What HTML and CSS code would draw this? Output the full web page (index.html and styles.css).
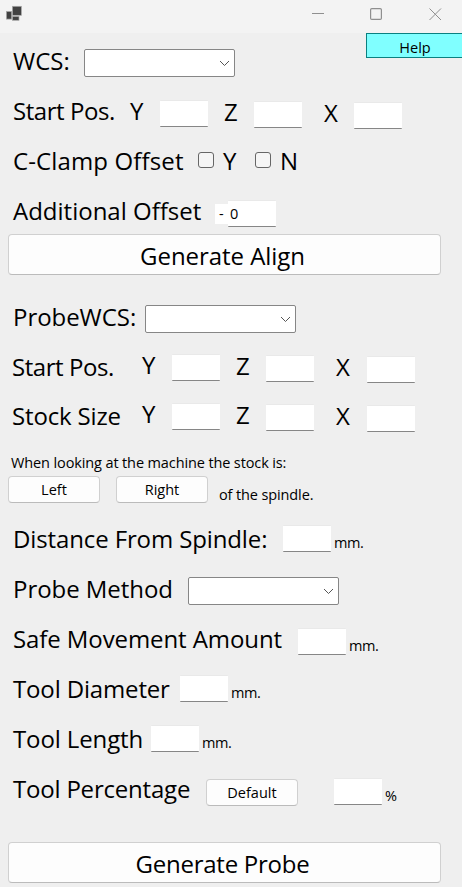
FILE: index.html
```html
<!DOCTYPE html>
<html lang="en">
<head>
<meta charset="utf-8">
<title>Probe Setup</title>
<link rel="stylesheet" href="styles.css">
</head>
<body>
<header class="titlebar">
  <svg class="app-icon" width="18" height="18" viewBox="0 0 18 18"><g fill="#414141" stroke="#a9a9a9" stroke-width=".7"><rect x="7.4" y="1.3" width="9" height="9"/><rect x="1.4" y="6.5" width="5.3" height="7.6"/><rect x="7.4" y="11.4" width="6.6" height="3.9"/></g></svg>
  <svg class="controls" width="150" height="33" viewBox="0 0 150 33" fill="none" stroke="#8f8f8f"><path d="M0 13.5h12"/><rect x="58.6" y="8.6" width="10.8" height="10.8" rx="1.2" stroke-width="1.2"/><path d="M117.5 8.5l11.5 11.5M129 8.5L117.5 20"/></svg>
</header>
<main class="form">
  <button class="help"><span>Help</span></button>

  <div class="row row-wcs">
    <span class="label t-wcs">WCS:</span>
    <div class="select"><svg width="11" height="7" viewBox="0 0 11 7"><path d="M1 1l4.5 4.5L10 1"/></svg></div>
  </div>
  <div class="row row-start">
    <span class="label t-start">Start Pos.</span>
    <span class="label">Y</span><input class="box">
    <span class="label z">Z</span><input class="box z">
    <span class="label x">X</span><input class="box x">
  </div>
  <div class="row row-clamp">
    <span class="label t-clamp">C-Clamp Offset</span>
    <i class="check"></i><span class="label">Y</span>
    <i class="check"></i><span class="label">N</span>
  </div>
  <div class="row row-additional">
    <span class="label">Additional Offset</span>
    <span class="minus">-</span><input class="box" value="0">
  </div>
  <button class="btn btn-large btn-align">Generate Align</button>

  <div class="row row-probe-wcs">
    <span class="label t-probe-wcs">ProbeWCS:</span>
    <div class="select"><svg width="11" height="7" viewBox="0 0 11 7"><path d="M1 1l4.5 4.5L10 1"/></svg></div>
  </div>
  <div class="row row-axes">
    <span class="label t-start">Start Pos.</span>
    <span class="label y">Y</span><input class="box y">
    <span class="label z">Z</span><input class="box z">
    <span class="label">X</span><input class="box">
  </div>
  <div class="row row-axes row-stock">
    <span class="label t-stock">Stock Size</span>
    <span class="label y">Y</span><input class="box y">
    <span class="label z">Z</span><input class="box z">
    <span class="label">X</span><input class="box">
  </div>

  <p class="small question">When looking at the machine the stock is:</p>
  <div class="sides">
    <button class="btn">Left</button>
    <button class="btn">Right</button>
    <span class="small">of the spindle.</span>
  </div>

  <div class="row row-distance">
    <span class="label t-distance">Distance From Spindle:</span><input class="box"><span class="small unit">mm.</span>
  </div>
  <div class="row row-method">
    <span class="label t-method">Probe Method</span>
    <div class="select"><svg width="11" height="7" viewBox="0 0 11 7"><path d="M1 1l4.5 4.5L10 1"/></svg></div>
  </div>
  <div class="row row-safe">
    <span class="label t-safe">Safe Movement Amount</span><input class="box"><span class="small unit">mm.</span>
  </div>
  <div class="row row-diameter">
    <span class="label t-diameter">Tool Diameter</span><input class="box"><span class="small unit">mm.</span>
  </div>
  <div class="row row-length">
    <span class="label t-length">Tool Length</span><input class="box"><span class="small unit">mm.</span>
  </div>
  <div class="row row-percent">
    <span class="label t-percent">Tool Percentage</span>
    <button class="btn">Default</button>
    <input class="box"><span class="small unit">%</span>
  </div>
  <button class="btn btn-large btn-probe">Generate Probe</button>
</main>
</body>
</html>
```
FILE: styles.css
```css
* { box-sizing: border-box; }

body {
  margin: 0;
  width: 462px;
  height: 887px;
  overflow: hidden;
  background: #efefef;
  color: #000;
  font: 14.5px/20px "Open Sans", "Noto Sans", sans-serif;
}

button, input { font: inherit; color: inherit; margin: 0; padding: 0; border-radius: 0; }

.titlebar {
  display: flex;
  justify-content: space-between;
  height: 33px;
  background: #f3f3f3;
}
.app-icon { margin: 5px 0 0 5px; }

.form { position: relative; padding-top: 11px; }

.help {
  position: absolute;
  top: 0;
  left: 366px;
  width: 98px;
  height: 25px;
  background: #80ffff;
  border: 1px solid #0a8080;
}
.help span {
  display: block;
  height: 18px;
  margin-top: 2px;
  overflow: hidden;
  line-height: 20px;
}

.row {
  display: grid;
  align-items: start;
  height: 40px;
  margin-bottom: 10px;
  padding-left: 12px;
}
.row-wcs { grid-template-columns: 72px 151px; }
.row-start { grid-template-columns: 118px 30px 64px 30px 70px 30px 48px; }
.row-clamp { grid-template-columns: 186px 25px 32px 25px 40px; }
.row-additional { grid-template-columns: 203px 13px 48px; margin-bottom: 0; }
.row-probe-wcs { grid-template-columns: 133px 151px; margin-top: 25px; }
.row-axes { grid-template-columns: 130px 30px 64px 30px 70px 31px 48px; }
.row-stock { margin-top: -1px; margin-bottom: 0; }
.row-distance { grid-template-columns: 271px 48px auto; margin-top: 18px; }
.row-method { grid-template-columns: 176px 151px; }
.row-safe { grid-template-columns: 286px 48px auto; }
.row-diameter { grid-template-columns: 168px 48px auto; }
.row-length { grid-template-columns: 139px 48px auto; }
.row-percent { grid-template-columns: 194px 128px 48px auto; }

.label { font-size: 24px; line-height: 34px; white-space: nowrap; }
.label:first-child { padding-left: 1px; }
.row-axes .label:first-child { padding-left: 0; }
.t-start { letter-spacing: -.45px; }
.t-clamp { letter-spacing: .13px; }
.t-probe-wcs { letter-spacing: -.05px; }
.t-stock { letter-spacing: -.15px; }
.t-distance { letter-spacing: -.12px; }
.t-method { letter-spacing: -.05px; }
.t-safe { letter-spacing: -.09px; }
.t-diameter { letter-spacing: -.15px; }
.t-length { letter-spacing: -.12px; }
.t-percent { letter-spacing: -.2px; }

.box {
  width: 48px;
  height: 27px;
  margin-top: 6px;
  padding-left: 2px;
  background: #fff;
  border: 1px solid #e9e9e9;
  border-width: 1px 0 1px 0;
  border-bottom-color: #868686;
  border-radius: 1px;
  outline: none;
}
.row-start .label.z { margin-top: 1px; }
.row-start .label.x { margin-top: 2px; }
.row-start .box.z { margin-top: 7px; }
.row-start .box.x { margin-top: 8px; }
.row-axes .label.y { margin-top: -2px; }
.row-axes .label.z { margin-top: -1px; }
.row-axes .box.y { margin-top: 4px; }
.row-axes .box.z { margin-top: 5px; }
.row-distance .box, .row-diameter .box, .row-length .box { margin-top: 3px; }

.select {
  display: flex;
  align-items: center;
  justify-content: flex-end;
  width: 151px;
  height: 28px;
  margin-top: 5px;
  padding-right: 4px;
  background: #fff;
  border: 1px solid #868686;
  border-radius: 2px;
}
.select path { fill: none; stroke: #555; }

.check {
  width: 16px;
  height: 16px;
  margin-top: 8px;
  background: #f5f5f5;
  border: 1px solid #666;
  border-radius: 3px;
}

.minus {
  height: 20px;
  margin-top: 10px;
  padding-left: 4px;
  background: #fff;
}

.btn {
  width: 92px;
  height: 27px;
  background: #fdfdfd;
  border: 1px solid #d0d0d0;
  border-bottom-color: #bbb;
  border-radius: 4px;
}
.btn-large {
  display: block;
  width: 433px;
  height: 41px;
  margin-left: 8px;
  padding: 2px 4px 0 0;
  font-size: 24px;
  line-height: 34px;
}
.btn-align { letter-spacing: -.05px; }
.btn-probe { margin-top: 30px; letter-spacing: -.25px; }

.small { white-space: nowrap; letter-spacing: -.12px; }
.question { margin: 14px 0 3px 11px; }
.sides { display: flex; gap: 16px; height: 28px; padding-left: 8px; }
.sides .small { margin: 9px 0 0 -5px; }

.unit { margin: 11px 0 0 3px; letter-spacing: -.4px; }
.row-safe .unit { margin-top: 14px; }
.row-percent .unit { margin-top: 14px; }
.row-percent .btn { margin-top: 7px; }
```
